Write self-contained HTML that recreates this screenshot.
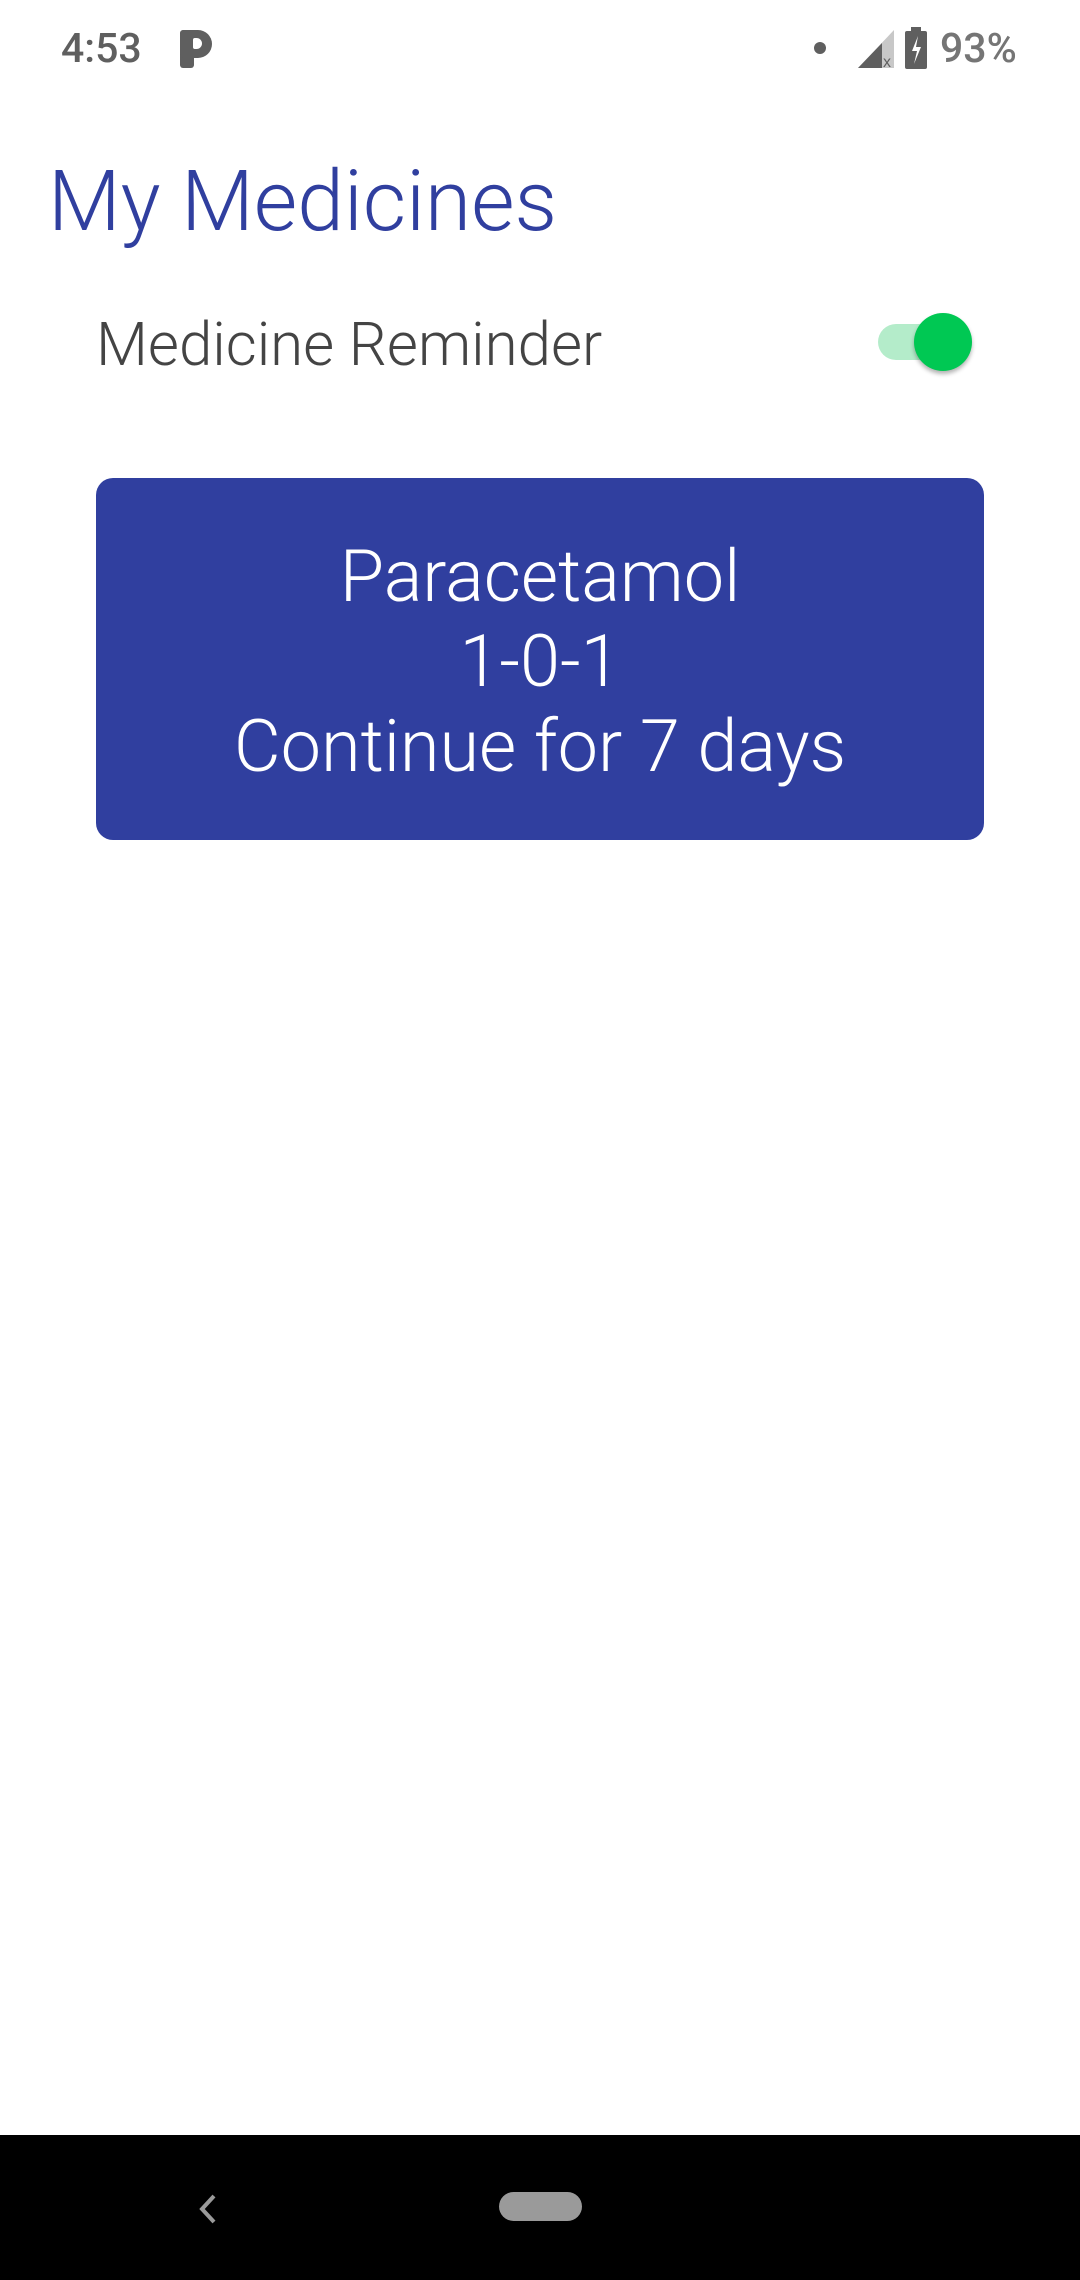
<!DOCTYPE html>
<html><head><meta charset="utf-8"><style>
html,body{margin:0;padding:0;width:1080px;height:2280px;background:#fff;overflow:hidden;font-family:"Roboto","Liberation Sans",sans-serif;position:relative}
.a{position:absolute}
</style></head><body>
<div class="a" style="left:61px;top:23px;font-size:41px;color:#5f5f5f;line-height:52px;font-weight:500">4:53</div>
<div class="a" style="left:180px;top:30px;width:14px;height:38px;background:#5f5f5f;border-radius:3px"></div>
<div class="a" style="left:180px;top:30px;width:32px;height:28px;background:#5f5f5f;border-radius:4px 14px 14px 4px"></div>
<div class="a" style="left:193px;top:38px;width:9px;height:11px;background:#fff;border-radius:2px 6px 6px 2px"></div>
<div class="a" style="left:814px;top:42px;width:12px;height:12px;border-radius:50%;background:#5f5f5f"></div>
<svg class="a" style="left:858px;top:30px" width="40" height="38" viewBox="0 0 40 38"><path d="M36 0V38H0Z" fill="#c8c8c8"/><path d="M24 13V38H0Z" fill="#5f5f5f"/><text x="25" y="37" font-size="16" fill="#5f5f5f" font-family="Liberation Sans">x</text></svg>
<svg class="a" style="left:905px;top:27px" width="22" height="42" viewBox="0 0 22 42"><rect x="6" y="0" width="10" height="5" fill="#5f5f5f"/><rect x="0" y="4" width="22" height="38" rx="2" fill="#5f5f5f"/><path d="M13 9 7 24h5l-3 13 7-17h-5z" fill="#fff"/></svg>
<div class="a" style="left:940px;top:23px;font-size:41px;color:#757575;line-height:52px;font-weight:500">93%</div>

<div class="a" style="left:48px;top:152px;font-size:84px;color:#303f9f;font-weight:300;line-height:100px;white-space:nowrap">My Medicines</div>
<div class="a" style="left:96px;top:310px;font-size:60px;color:#444;font-weight:300;line-height:70px;white-space:nowrap">Medicine Reminder</div>
<div class="a" style="left:878px;top:324px;width:93px;height:36px;border-radius:18px;background:#b4ecca"></div>
<div class="a" style="left:914px;top:313px;width:58px;height:58px;border-radius:50%;background:#00c853;box-shadow:0 3px 4px rgba(0,0,0,.3)"></div>

<div class="a" style="left:96px;top:478px;width:888px;height:362px;border-radius:17px;background:#303f9f;color:#fff;font-size:72px;font-weight:300;line-height:85px;text-align:center;box-sizing:border-box;padding-top:56px">Paracetamol<br>1-0-1<br>Continue for 7 days</div>

<div class="a" style="left:0;top:2135px;width:1080px;height:145px;background:#000"></div>
<svg class="a" style="left:196px;top:2192px" width="24" height="34" viewBox="0 0 24 34"><path d="M18 4 6 17l12 13" stroke="#9a9a9a" stroke-width="4" fill="none"/></svg>
<div class="a" style="left:499px;top:2192px;width:83px;height:29px;border-radius:15px;background:#9a9a9a"></div>
</body></html>
